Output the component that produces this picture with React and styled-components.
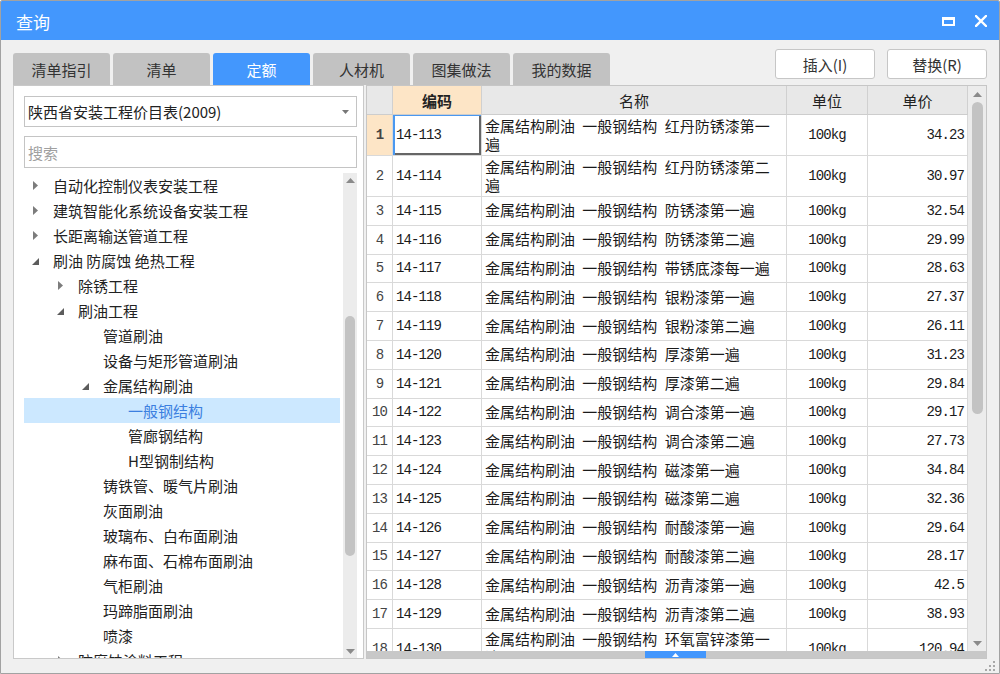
import React from 'react';
import styled, { createGlobalStyle } from 'styled-components';

const CJK = `"Noto Sans CJK SC", "Microsoft YaHei", sans-serif`;
const MONO = `"Liberation Mono", "Noto Sans CJK SC", monospace`;

const GlobalStyle = createGlobalStyle`
  html, body { margin: 0; padding: 0; background: #ffffff; }
  body { font-family: ${CJK}; }
  * { box-sizing: border-box; }
`;

const Window = styled.div`
  width: 1000px;
  height: 674px;
  border: 1px solid #a2a2a2;
  border-radius: 2px 2px 0 0;
  background: #f0f0f0;
  display: flex;
  flex-direction: column;
  overflow: hidden;
`;

const TitleBar = styled.div`
  height: 39px;
  flex: none;
  background: #4397fd;
  color: #fff;
  display: flex;
  align-items: center;
  padding: 0 12px 0 15px;
  font-size: 17px;
`;

const Title = styled.div`
  flex: 1;
  line-height: 1;
  margin-top: 2px;
`;

const TitleButtons = styled.div`
  display: flex;
  align-items: center;
  gap: 20px;
  margin-top: 1px;
`;

const TopRow = styled.div`
  height: 45px;
  flex: none;
  display: flex;
  justify-content: space-between;
  padding: 0 12px;
`;

const Tabs = styled.div`
  display: flex;
  gap: 3px;
  align-self: flex-end;
`;

const Tab = styled.div`
  width: 97px;
  height: 32px;
  border-radius: 3px 3px 0 0;
  display: flex;
  align-items: center;
  justify-content: center;
  font-size: 15px;
  background: ${p => (p.$active ? '#4397fd' : '#c2c2c2')};
  color: ${p => (p.$active ? '#ffffff' : '#333333')};
`;

const Actions = styled.div`
  display: flex;
  gap: 12px;
  padding-top: 9px;
`;

const Button = styled.button`
  width: 100px;
  height: 30px;
  background: #fff;
  border: 1px solid #c6c6c6;
  border-radius: 3px;
  font-family: ${CJK};
  font-size: 15px;
  color: #333;
  padding: 0;
`;

const Main = styled.div`
  height: 574px;
  flex: none;
  display: flex;
  gap: 2px;
  padding: 0 12px;
`;

const LeftPanel = styled.div`
  width: 351px;
  flex: none;
  border: 1px solid #c9c9c9;
  background: #fff;
  display: flex;
  flex-direction: column;
  padding: 10px 6px 0 10px;
`;

const Combo = styled.div`
  height: 31px;
  flex: none;
  border: 1px solid #c4c4c4;
  display: flex;
  align-items: center;
  justify-content: space-between;
  padding: 0 7px 0 3px;
  font-size: 15px;
  color: #222;
`;

const Search = styled.div`
  height: 32px;
  flex: none;
  margin-top: 9px;
  border: 1px solid #c4c4c4;
  display: flex;
  align-items: center;
  padding: 0 3px;
  font-size: 15px;
  color: #a0a0a0;
`;

const TreeArea = styled.div`
  flex: 1;
  min-height: 0;
  margin-top: 5px;
  display: flex;
  gap: 3px;
`;

const TreeList = styled.div`
  flex: 1;
  overflow: hidden;
`;

const TreeRow = styled.div`
  height: 25px;
  display: flex;
  align-items: center;
  padding-left: ${p => 8 + p.$level * 25}px;
  font-size: 15px;
  white-space: nowrap;
  color: ${p => (p.$selected ? '#3b7fe0' : '#222')};
  background: ${p => (p.$selected ? '#cce8ff' : 'transparent')};
`;

const Expander = styled.span`
  width: 21px;
  flex: none;
  display: flex;
  align-items: center;
  padding-left: ${p => (p.$open ? 0 : 1)}px;
  padding-top: ${p => (p.$open ? 2 : 0)}px;
`;

const ScrollTrack = styled.div`
  width: ${p => p.$w}px;
  flex: none;
  background: #ececec;
  display: flex;
  flex-direction: column;
  align-items: center;
`;

const ArrowBox = styled.div`
  height: ${p => p.$h}px;
  flex: none;
  display: flex;
  align-items: center;
  justify-content: center;
`;

const Thumb = styled.div`
  width: ${p => p.$w}px;
  height: ${p => p.$h}px;
  margin-top: ${p => p.$top}px;
  background: #c3c3c3;
  border-radius: 6px;
  flex: none;
`;

const Spacer = styled.div`
  flex: 1;
`;

const GridPanel = styled.div`
  width: 621px;
  flex: none;
  border: 1px solid #c6c6c6;
  background: #fff;
  display: flex;
  flex-direction: column;
`;

const GridMain = styled.div`
  flex: 1;
  min-height: 0;
  display: flex;
`;

const Table = styled.div`
  width: 601px;
  flex: none;
  overflow: hidden;
`;

const COLS = '26px 89px 305px 81px 100px';

const HeaderRow = styled.div`
  display: grid;
  grid-template-columns: ${COLS};
  height: 29px;
`;

const HeaderCell = styled.div`
  background: ${p => (p.$hl ? '#fde5c6' : '#e8e8e8')};
  border-right: 1px solid #d0d0d0;
  border-bottom: 1px solid #cdcdcd;
  display: flex;
  align-items: center;
  justify-content: center;
  font-size: 15px;
  font-weight: ${p => (p.$hl ? 700 : 400)};
  color: #222;
`;

const Row = styled.div`
  display: grid;
  grid-template-columns: ${COLS};
  height: ${p => p.$h}px;
`;

const Cell = styled.div`
  border-right: 1px solid #d9d9d9;
  border-bottom: 1px solid #d9d9d9;
  display: flex;
  align-items: center;
  overflow: hidden;
  color: #1a1a1a;
`;

const NumCell = styled(Cell)`
  justify-content: center;
  font-family: ${MONO};
  font-size: 14px;
  letter-spacing: -0.9px;
  color: #444;
  font-weight: ${p => (p.$active ? 700 : 400)};
  background: ${p => (p.$active ? '#fde5c6' : '#fff')};
`;

const CodeCell = styled(Cell)`
  padding-left: 3px;
  font-family: ${MONO};
  font-size: 14px;
  letter-spacing: -0.9px;
  box-shadow: ${p => (p.$focus ? 'inset 2px 1px 0 #4a98f0, inset -2px -2px 0 #666' : 'none')};
`;

const NameCell = styled(Cell)`
  padding: 0 8px 1px 3px;
  font-size: 15px;
  line-height: 18px;
  word-spacing: 4px;
`;

const UnitCell = styled(Cell)`
  justify-content: center;
  font-family: ${MONO};
  font-size: 14px;
  letter-spacing: -0.9px;
`;

const PriceCell = styled(Cell)`
  justify-content: flex-end;
  padding-right: 3px;
  font-family: ${MONO};
  font-size: 14px;
  letter-spacing: -0.9px;
`;

const HBar = styled.div`
  height: 7px;
  flex: none;
  background: #c8c8c8;
  display: flex;
`;

const Handle = styled.div`
  width: 61px;
  margin-left: 278px;
  background: #4397fd;
  display: flex;
  align-items: center;
  justify-content: center;
`;

const BottomStrip = styled.div`
  flex: 1;
  display: flex;
  justify-content: flex-end;
  align-items: center;
  padding-right: 4px;
`;

const tree = [
  { level: 0, t: '自动化控制仪表安装工程', e: 'closed' },
  { level: 0, t: '建筑智能化系统设备安装工程', e: 'closed' },
  { level: 0, t: '长距离输送管道工程', e: 'closed' },
  { level: 0, t: '刷油 防腐蚀 绝热工程', e: 'open' },
  { level: 1, t: '除锈工程', e: 'closed' },
  { level: 1, t: '刷油工程', e: 'open' },
  { level: 2, t: '管道刷油' },
  { level: 2, t: '设备与矩形管道刷油' },
  { level: 2, t: '金属结构刷油', e: 'open' },
  { level: 3, t: '一般钢结构', sel: true },
  { level: 3, t: '管廊钢结构' },
  { level: 3, t: 'H型钢制结构' },
  { level: 2, t: '铸铁管、暖气片刷油' },
  { level: 2, t: '灰面刷油' },
  { level: 2, t: '玻璃布、白布面刷油' },
  { level: 2, t: '麻布面、石棉布面刷油' },
  { level: 2, t: '气柜刷油' },
  { level: 2, t: '玛蹄脂面刷油' },
  { level: 2, t: '喷漆' },
  { level: 1, t: '防腐蚀涂料工程', e: 'closed' },
];

const rows = [
  ['14-113', '红丹防锈漆第一遍', '34.23', true],
  ['14-114', '红丹防锈漆第二遍', '30.97', true],
  ['14-115', '防锈漆第一遍', '32.54'],
  ['14-116', '防锈漆第二遍', '29.99'],
  ['14-117', '带锈底漆每一遍', '28.63'],
  ['14-118', '银粉漆第一遍', '27.37'],
  ['14-119', '银粉漆第二遍', '26.11'],
  ['14-120', '厚漆第一遍', '31.23'],
  ['14-121', '厚漆第二遍', '29.84'],
  ['14-122', '调合漆第一遍', '29.17'],
  ['14-123', '调合漆第二遍', '27.73'],
  ['14-124', '磁漆第一遍', '34.84'],
  ['14-125', '磁漆第二遍', '32.36'],
  ['14-126', '耐酸漆第一遍', '29.64'],
  ['14-127', '耐酸漆第二遍', '28.17'],
  ['14-128', '沥青漆第一遍', '42.5'],
  ['14-129', '沥青漆第二遍', '38.93'],
  ['14-130', '环氧富锌漆第一遍', '120.94', true],
];

const TriRight = () => (
  <svg width="5" height="9" viewBox="0 0 5 9"><path d="M0 0L5 4.5L0 9Z" fill="#7c7c7c" /></svg>
);
const TriOpen = () => (
  <svg width="7" height="7" viewBox="0 0 7 7"><path d="M7 0L7 7L0 7Z" fill="#5c5c5c" /></svg>
);
const TriUp = ({ c = '#8a8a8a' }) => (
  <svg width="9" height="5" viewBox="0 0 9 5"><path d="M0 5L4.5 0L9 5Z" fill={c} /></svg>
);
const TriDown = ({ c = '#8a8a8a' }) => (
  <svg width="9" height="5" viewBox="0 0 9 5"><path d="M0 0L4.5 5L9 0Z" fill={c} /></svg>
);

export default function App() {
  return (
    <>
      <GlobalStyle />
      <Window>
        <TitleBar>
          <Title>查询</Title>
          <TitleButtons>
            <svg width="13" height="9" viewBox="0 0 13 9">
              <path d="M0 0H13V9H0Z M2 3V7H11V3Z" fill="#fff" fillRule="evenodd" />
            </svg>
            <svg width="12" height="12" viewBox="0 0 12 12">
              <path d="M1 1L11 11M11 1L1 11" stroke="#fff" strokeWidth="2.4" strokeLinecap="square" />
            </svg>
          </TitleButtons>
        </TitleBar>

        <TopRow>
          <Tabs>
            {['清单指引', '清单', '定额', '人材机', '图集做法', '我的数据'].map(t => (
              <Tab key={t} $active={t === '定额'}>{t}</Tab>
            ))}
          </Tabs>
          <Actions>
            <Button>插入(I)</Button>
            <Button>替换(R)</Button>
          </Actions>
        </TopRow>

        <Main>
          <LeftPanel>
            <Combo>
              <span>陕西省安装工程价目表(2009)</span>
              <svg width="7" height="4" viewBox="0 0 7 4"><path d="M0 0L3.5 4L7 0Z" fill="#777" /></svg>
            </Combo>
            <Search>搜索</Search>
            <TreeArea>
              <TreeList>
                {tree.map((n, i) => (
                  <TreeRow key={i} $level={n.level} $selected={n.sel}>
                    <Expander $open={n.e === 'open'}>
                      {n.e === 'closed' && <TriRight />}
                      {n.e === 'open' && <TriOpen />}
                    </Expander>
                    {n.t}
                  </TreeRow>
                ))}
              </TreeList>
              <ScrollTrack $w={14}>
                <ArrowBox $h={14}><TriUp /></ArrowBox>
                <Thumb $w={10} $h={240} $top={129} />
                <Spacer />
                <ArrowBox $h={14}><TriDown /></ArrowBox>
              </ScrollTrack>
            </TreeArea>
          </LeftPanel>

          <GridPanel>
            <GridMain>
              <Table>
                <HeaderRow>
                  <HeaderCell />
                  <HeaderCell $hl>编码</HeaderCell>
                  <HeaderCell>名称</HeaderCell>
                  <HeaderCell>单位</HeaderCell>
                  <HeaderCell>单价</HeaderCell>
                </HeaderRow>
                {rows.map((r, i) => (
                  <Row key={r[0]} $h={r[3] ? 41 : 28.8}>
                    <NumCell $active={i === 0}>{i + 1}</NumCell>
                    <CodeCell $focus={i === 0}>{r[0]}</CodeCell>
                    <NameCell>金属结构刷油 一般钢结构 {r[1]}</NameCell>
                    <UnitCell>100kg</UnitCell>
                    <PriceCell>{r[2]}</PriceCell>
                  </Row>
                ))}
              </Table>
              <ScrollTrack $w={18}>
                <ArrowBox $h={16}><TriUp /></ArrowBox>
                <Thumb $w={11} $h={312} $top={0} />
                <Spacer />
                <ArrowBox $h={16}><TriDown /></ArrowBox>
              </ScrollTrack>
            </GridMain>
            <HBar>
              <Handle>
                <svg width="7" height="4" viewBox="0 0 7 4"><path d="M0 4L3.5 0L7 4Z" fill="#fff" /></svg>
              </Handle>
            </HBar>
          </GridPanel>
        </Main>

        <BottomStrip>
          <svg width="10" height="10" viewBox="0 0 10 10">
            <rect x="8" y="0" width="2" height="2" fill="#a8a8a8" />
            <rect x="4" y="4" width="2" height="2" fill="#a8a8a8" />
            <rect x="8" y="4" width="2" height="2" fill="#a8a8a8" />
            <rect x="0" y="8" width="2" height="2" fill="#a8a8a8" />
            <rect x="4" y="8" width="2" height="2" fill="#a8a8a8" />
            <rect x="8" y="8" width="2" height="2" fill="#a8a8a8" />
          </svg>
        </BottomStrip>
      </Window>
    </>
  );
}
